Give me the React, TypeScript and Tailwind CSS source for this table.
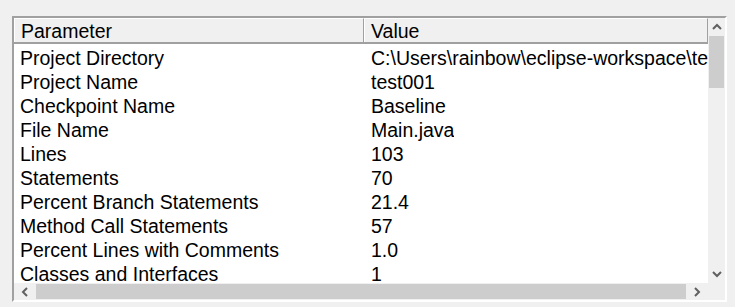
import React from "react";

type Row = {
  param: string;
  value: string;
};

const rows: Row[] = [
  { param: "Project Directory", value: "C:\\Users\\rainbow\\eclipse-workspace\\test001" },
  { param: "Project Name", value: "test001" },
  { param: "Checkpoint Name", value: "Baseline" },
  { param: "File Name", value: "Main.java" },
  { param: "Lines", value: "103" },
  { param: "Statements", value: "70" },
  { param: "Percent Branch Statements", value: "21.4" },
  { param: "Method Call Statements", value: "57" },
  { param: "Percent Lines with Comments", value: "1.0" },
  { param: "Classes and Interfaces", value: "1" },
  { param: "Methods per Class", value: "3.00" },
];

const Chevron = ({ dir }: { dir: "up" | "down" | "left" | "right" }) => {
  const paths = {
    up: "M1 6 L5 2 L9 6",
    down: "M1 2 L5 6 L9 2",
    left: "M6 1 L2 5 L6 9",
    right: "M2 1 L6 5 L2 9",
  };
  const vertical = dir === "up" || dir === "down";
  return (
    <svg
      width={vertical ? 10 : 8}
      height={vertical ? 8 : 10}
      viewBox={vertical ? "0 0 10 8" : "0 0 8 10"}
      fill="none"
      stroke="#606060"
      strokeWidth="2"
    >
      <path d={paths[dir]} />
    </svg>
  );
};

const HeaderCell = ({ label, className }: { label: string; className: string }) => {
  return (
    <div
      className={`h-[24px] leading-[24px] pl-[6px] border-t border-l border-t-white border-l-white border-r border-r-[#a0a0a0] whitespace-nowrap overflow-hidden ${className}`}
    >
      {label}
    </div>
  );
};

const App = () => {
  return (
    <div
      className="w-[735px] h-[307px] bg-[#f0f0f0] pt-[16px] pl-[12px] overflow-hidden"
      style={{ fontFamily: '"Liberation Sans", Arial, sans-serif' }}
    >
      {/* sunken list frame */}
      <div className="w-[715px] h-[286px] border-t-2 border-l-2 border-t-[#a0a0a0] border-l-[#a0a0a0] border-r-2 border-b-2 border-r-white border-b-white">
        <div className="grid grid-cols-[694px_17px] grid-rows-[265px_17px] h-full text-[19.5px] text-black">
          <div className="bg-white overflow-hidden">
            <div className="flex bg-[#f0f0f0] border-b-2 border-b-[#a0a0a0]">
              <HeaderCell label="Parameter" className="w-[350px] shrink-0" />
              <HeaderCell label="Value" className="flex-1" />
            </div>
            <div className="pt-[2px]">
              {rows.map((row) => (
                <div key={row.param} className="flex h-[24px] leading-[24px] whitespace-nowrap">
                  <div className="w-[350px] shrink-0 pl-[6px] overflow-hidden">{row.param}</div>
                  <div className="pl-[7px] overflow-hidden">{row.value}</div>
                </div>
              ))}
            </div>
          </div>

          {/* vertical scrollbar */}
          <div className="bg-[#f0f0f0] flex flex-col">
            <div className="h-[18px] flex items-center justify-center">
              <Chevron dir="up" />
            </div>
            <div className="h-[52px] mx-[1px] bg-[#cdcdcd]" />
            <div className="flex-1" />
            <div className="h-[18px] flex items-center justify-center">
              <Chevron dir="down" />
            </div>
          </div>

          {/* horizontal scrollbar */}
          <div className="bg-[#f0f0f0] flex items-stretch">
            <div className="w-[22px] flex items-center justify-center">
              <Chevron dir="left" />
            </div>
            <div className="flex-1 my-[1px] bg-[#cdcdcd]" />
            <div className="w-[22px] flex items-center justify-center">
              <Chevron dir="right" />
            </div>
          </div>
          <div className="bg-[#f0f0f0]" />
        </div>
      </div>
    </div>
  );
};

export default App;
